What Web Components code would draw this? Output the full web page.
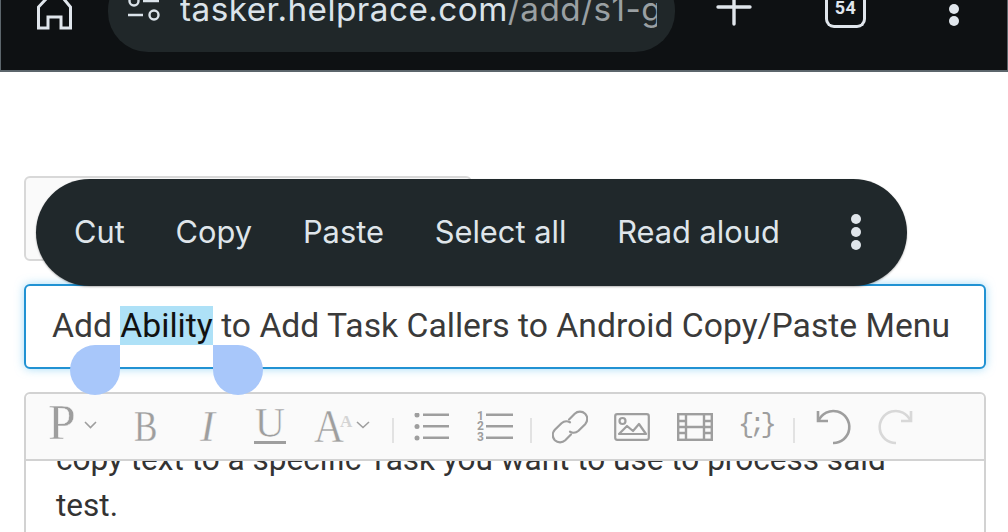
<!DOCTYPE html>
<html lang="en">
<head>
<meta charset="utf-8">
<title>Add task</title>
<style>
  html, body { margin: 0; height: 532px; overflow: hidden; background: #fff; }
</style>
</head>
<body>
<browser-bar url-host="tasker.helprace.com" url-path="/add/s1-general" tabs="54"></browser-bar>
<task-form>
  <text-menu></text-menu>
</task-form>
<script>
class BrowserBar extends HTMLElement {
  connectedCallback() {
    this.attachShadow({ mode: 'open' });
    this.shadowRoot.innerHTML = `
      <style>
        :host {
          display: flex;
          height: 72px;
          box-sizing: border-box;
          background: #0e1113;
          border: 1px solid #5c666c;
          border-top: 0;
          border-bottom-width: 2px;
          overflow: hidden;
          color: #e0e6ec;
        }
        svg { display: block; flex: none; }
        .home { margin-left: 35px; }
        .pill {
          flex: none;
          box-sizing: border-box;
          width: 567px;
          height: 82px;
          margin: -30px 0 0 34px;
          padding: 0 18px 0 20px;
          border-radius: 40px;
          background: #202729;
          display: flex;
          align-items: flex-end;
        }
        .tune { margin-bottom: 29px; }
        .url {
          flex: 1;
          margin: 0 0 19px 18px;
          white-space: nowrap;
          overflow: hidden;
          font: 400 33.300px/48px Inter, sans-serif;
          letter-spacing: .45px;
          color: #dbe3ea;
        }
        .url span { color: #9aa0a3; }
        .plus { margin-left: 41px; }
        .tabs {
          flex: none;
          box-sizing: border-box;
          width: 41px;
          height: 28px;
          margin: 0 0 0 73px;
          border: 3px solid #e0e6ec;
          border-top: 0;
          border-radius: 0 0 9px 9px;
          text-align: center;
          font: 700 18px/15px Roboto, sans-serif;
          letter-spacing: .5px;
        }
        .more { margin-left: 82px; }
      </style>
      <svg class="home" width="38" height="30" viewBox="0 0 38 30" fill="none" stroke="#e0e6ec" stroke-width="3">
        <path d="M2.500 28V7L11-2H27L34.500 7V28H25V17H12V28Z"/>
      </svg>
      <div class="pill">
        <svg class="tune" width="34" height="30" viewBox="0 0 34 30" fill="none" stroke="#dbe3ea" stroke-width="2.400">
          <path d="M15 8H31M0 22H15"/>
          <circle cx="6" cy="8" r="4.500"/>
          <circle cx="26" cy="22" r="4.500"/>
        </svg>
        <div class="url">${this.getAttribute('url-host')}<span>${this.getAttribute('url-path')}</span></div>
      </div>
      <svg class="plus" width="36" height="26" viewBox="0 0 36 26" fill="none" stroke="#e0e6ec" stroke-width="3.400" stroke-linecap="round">
        <path d="M2 7H34M18-8V24"/>
      </svg>
      <div class="tabs">${this.getAttribute('tabs')}</div>
      <svg class="more" width="12" height="28" viewBox="0 0 12 28" fill="#e0e6ec">
        <circle cx="6" cy="9" r="5"/>
        <circle cx="6" cy="21" r="5"/>
      </svg>
    `;
  }
}
customElements.define('browser-bar', BrowserBar);

class TextMenu extends HTMLElement {
  connectedCallback() {
    this.attachShadow({ mode: 'open' });
    this.shadowRoot.innerHTML = `
      <style>
        :host {
          position: absolute;
          left: 36px;
          top: 179px;
          width: 871px;
          height: 107px;
          box-sizing: border-box;
          padding: 0 39px 2px 38px;
          display: flex;
          align-items: center;
          gap: 50.800px;
          border-radius: 54px;
          background: #20282b;
          color: #dfe5ea;
          font: 400 30.800px/40px Inter, Roboto, sans-serif;
          box-shadow: 0 1px 2px rgba(0,0,0,.3);
        }
        span { white-space: nowrap; }
        svg { margin-left: auto; margin-right: 6px; }
      </style>
      <span>Cut</span><span>Copy</span><span>Paste</span><span>Select all</span><span>Read aloud</span>
      <svg width="12" height="38" viewBox="0 0 12 38" fill="#dfe5ea">
        <circle cx="6" cy="6" r="5"/><circle cx="6" cy="19" r="5"/><circle cx="6" cy="32" r="5"/>
      </svg>
    `;
  }
}
customElements.define('text-menu', TextMenu);

class TitleInput extends HTMLElement {
  connectedCallback() {
    this.attachShadow({ mode: 'open' });
    this.shadowRoot.innerHTML = `
      <style>
        :host {
          display: block;
          box-sizing: border-box;
          height: 85px;
          padding: 0 0 0 26px;
          background: #fff;
          border: 2px solid #2192d3;
          border-radius: 6px;
          box-shadow: 0 0 10px rgba(90,190,240,.55);
          font: 400 33.700px/80px Roboto, sans-serif;
          color: #3a3a3a;
          white-space: nowrap;
        }
        .sel {
          position: relative;
          display: inline-block;
          height: 39px;
          line-height: 39px;
          background: #aee1f7;
          color: #111;
        }
        .handle {
          position: absolute;
          top: 100%;
          width: 50px;
          height: 50px;
          background: #a8c7fa;
        }
        .left { right: 100%; border-radius: 50% 0 50% 50%; }
        .right { left: 100%; border-radius: 0 50% 50% 50%; }
      </style>
      Add <span class="sel">Ability<i class="handle left"></i><i class="handle right"></i></span> to Add Task Callers to Android Copy/Paste Menu
    `;
  }
}
customElements.define('title-input', TitleInput);

class EditorToolbar extends HTMLElement {
  connectedCallback() {
    this.attachShadow({ mode: 'open' });
    this.shadowRoot.innerHTML = `
      <style>
        :host {
          display: flex;
          align-items: center;
          box-sizing: border-box;
          height: 67px;
          padding-left: 22px;
          background: #fafafa;
          border-bottom: 2px solid #d2d2d2;
          border-radius: 6px 6px 0 0;
          color: #9e9e9e;
        }
        svg { display: block; flex: none; }
        .g {
          font-family: "Liberation Serif", serif;
          line-height: 36px;
          flex: none;
          transform-origin: left center;
          -webkit-text-stroke: .5px #fafafa;
        }
        .sep { flex: none; width: 2px; height: 25px; margin-top: 8px; background: #e2e2e2; }
      </style>
      <span class="g" style="font-size:50px;width:25px;margin-bottom:9px">P</span>
      <svg style="margin:0 0 3px 11px" width="13" height="8" viewBox="0 0 13 8" fill="none" stroke="#9e9e9e" stroke-width="1.600"><path d="M1 1L6.500 6.500 12 1"/></svg>
      <span class="g" style="font-size:45px;width:26px;margin:0 0 1px 37px;transform:scaleX(.78);-webkit-text-stroke-width:.3px">B</span>
      <span class="g" style="font-size:45px;width:20px;margin:0 0 1px 40px;font-style:italic">I</span>
      <span class="g" style="font-size:42px;width:32px;margin:-8px 0 0 34px;text-align:center;position:relative">U<svg style="position:absolute;left:0;top:36px" width="32" height="3"><rect width="32" height="3" fill="#9e9e9e"/></svg></span>
      <span class="g" style="font-size:46px;width:26px;margin:1px 0 0 28px;transform:scaleX(.9)">A</span>
      <span class="g" style="font-size:17px;line-height:16px;width:14px;margin-bottom:10px;color:#d4d4d4;font-weight:700;-webkit-text-stroke:0">A</span>
      <svg style="margin:0 0 3px 2px" width="14" height="8" viewBox="0 0 14 8" fill="none" stroke="#9e9e9e" stroke-width="1.600"><path d="M1 1L7 6.500 13 1"/></svg>
      <i class="sep" style="margin-left:22px"></i>
      <svg style="margin-left:20px" width="36" height="28" viewBox="0 0 36 28" fill="#9e9e9e">
        <circle cx="3" cy="2" r="2.500"/><circle cx="3" cy="13.500" r="2.500"/><circle cx="3" cy="25" r="2.500"/>
        <rect x="9" y="0.500" width="26" height="2.500"/><rect x="9" y="12" width="26" height="2.500"/><rect x="9" y="23.500" width="26" height="2.500"/>
      </svg>
      <span style="flex:none;width:9px;margin-left:26px;font:700 12px/10.500px Roboto,sans-serif;text-align:center">1<br>2<br>3</span>
      <svg style="margin-left:1px" width="27" height="28" viewBox="0 0 27 28" fill="#9e9e9e">
        <rect x="0" y="0.500" width="27" height="2.500"/><rect x="0" y="12" width="27" height="2.500"/><rect x="0" y="23.500" width="27" height="2.500"/>
      </svg>
      <i class="sep" style="margin-left:17px"></i>
      <svg style="margin-left:20px" width="36" height="38" viewBox="0 0 38 38" fill="none" stroke="#9e9e9e" stroke-width="2.300" stroke-linecap="round">
        <path d="M18 11l6-6a8 8 0 0 1 11 0a8 8 0 0 1 0 11l-7 7a8 8 0 0 1-9 1"/>
        <path d="M20 27l-6 6a8 8 0 0 1-11 0a8 8 0 0 1 0-11l7-7a8 8 0 0 1 9-1"/>
      </svg>
      <svg style="margin-left:26px" width="36" height="28" viewBox="0 0 36 28" fill="none" stroke="#9e9e9e" stroke-width="2.200">
        <rect x="1.200" y="1.200" width="33.600" height="25.600" rx="2"/>
        <circle cx="8.500" cy="8" r="3"/>
        <path d="M5 21l8-8 6 5 6-7 7 10Z" stroke-linejoin="round"/>
      </svg>
      <svg style="margin-left:27px" width="36" height="28" viewBox="0 0 36 28" fill="none" stroke="#9e9e9e" stroke-width="2.400">
        <rect x="1.200" y="1.200" width="33.600" height="25.600"/>
        <path d="M9 1V27M27 1V27M9 14H27M1 8H9M1 14H9M1 20H9M27 8H35M27 14H35M27 20H35"/>
      </svg>
      <span style="flex:none;width:32px;margin:0 3px 4px 25px;font:400 27px/32px 'Liberation Mono',monospace;letter-spacing:-5px;white-space:nowrap">{;}</span>
      <i class="sep" style="margin-left:20px"></i>
      <svg style="margin-left:19px" width="38" height="38" viewBox="0 0 38 38" fill="none" stroke="#9e9e9e" stroke-width="2.600">
        <path d="M4 3V13H14"/><path d="M4.500 13A16 16 0 1 1 19 35"/>
      </svg>
      <svg style="margin-left:25px" width="38" height="38" viewBox="0 0 38 38" fill="none" stroke="#d8d8d8" stroke-width="2.600">
        <path d="M34 3V13H24"/><path d="M33.500 13A16 16 0 1 0 19 35"/>
      </svg>
    `;
  }
}
customElements.define('editor-toolbar', EditorToolbar);

class RichEditor extends HTMLElement {
  connectedCallback() {
    this.attachShadow({ mode: 'open' });
    this.shadowRoot.innerHTML = `
      <style>
        :host {
          display: block;
          box-sizing: border-box;
          height: 170px;
          background: #fff;
          border: 2px solid #d2d2d2;
          border-radius: 6px;
        }
        .body {
          height: 99px;
          overflow: hidden;
          padding: 0 60px 0 30px;
          font: 400 31.550px/46px Roboto, sans-serif;
          color: #333;
        }
      </style>
      <editor-toolbar></editor-toolbar>
      <div class="body"><slot></slot></div>
    `;
  }
}
customElements.define('rich-editor', RichEditor);

class TaskForm extends HTMLElement {
  connectedCallback() {
    this.attachShadow({ mode: 'open' });
    this.shadowRoot.innerHTML = `
      <style>
        :host {
          display: flex;
          flex-direction: column;
          box-sizing: border-box;
          height: 460px;
          overflow: hidden;
          padding: 104px 22px 0 24px;
        }
        .select {
          flex: none;
          box-sizing: border-box;
          width: 448px;
          height: 85px;
          background: #fafafa;
          border: 2px solid #d8d8d8;
          border-radius: 6px;
        }
        title-input { flex: none; margin-top: 23px; }
        rich-editor { flex: none; margin-top: 23px; }
        p { margin: -24px 0 0; }
      </style>
      <div class="select"></div>
      <title-input></title-input>
      <rich-editor><p>copy text to a specific Task you want to use to process said test.</p></rich-editor>
      <slot></slot>
    `;
  }
}
customElements.define('task-form', TaskForm);
</script>
</body>
</html>
